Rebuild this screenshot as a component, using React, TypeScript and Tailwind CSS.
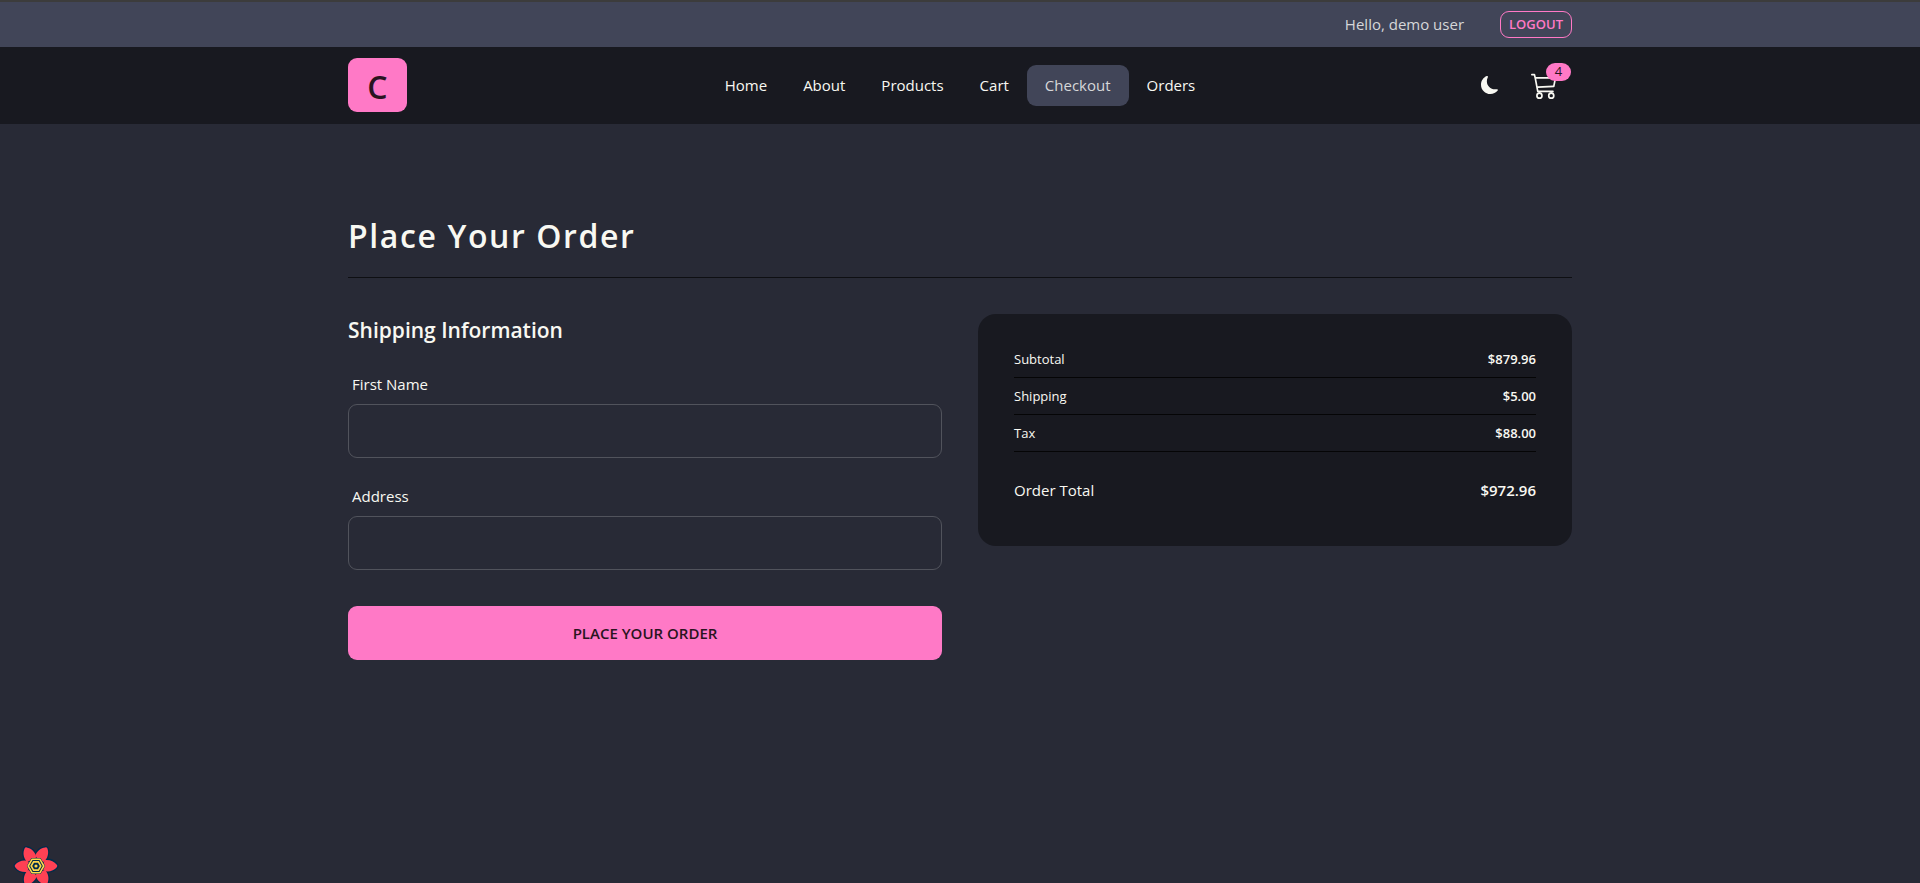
import { useState } from "react";
import { BsCart3, BsMoonFill } from "react-icons/bs";

const links = ["Home", "About", "Products", "Cart", "Checkout", "Orders"];

const charges = [
  { label: "Subtotal", amount: "$879.96" },
  { label: "Shipping", amount: "$5.00" },
  { label: "Tax", amount: "$88.00" },
];

const orderTotal = "$972.96";

const petals = [0, 60, 120, 180, 240, 300];

const petalPath =
  "M-7.4 -4.6 C-12 -6.6 -18 -4.8 -20.8 -1.2 C-21.4 -0.4 -21.4 0.4 -20.8 1.2 C-18 5 -13.6 6.6 -8.8 6 C-7 2.8 -6.6 -0.8 -7.4 -4.6 Z";

function FlowerLogo() {
  return (
    <svg viewBox="-23 -23 46 46" className="size-[46px]" aria-hidden="true">
      <g fill="#002c4b" stroke="#002c4b" strokeWidth="2.6" strokeLinejoin="round">
        {petals.map((angle) => (
          <path key={angle} transform={`rotate(${angle})`} d={petalPath} />
        ))}
      </g>
      <g fill="#ff4154">
        {petals.map((angle) => (
          <path key={angle} transform={`rotate(${angle})`} d={petalPath} />
        ))}
      </g>
      <polygon points="-9.2,0 -4.6,-8 4.6,-8 9.2,0 4.6,8 -4.6,8" fill="#002c4b" />
      <g fill="none" stroke="#ffd94c" strokeWidth="1.6">
        <polygon points="-7.8,0 -3.9,-6.8 3.9,-6.8 7.8,0 3.9,6.8 -3.9,6.8" />
        <polygon points="-4.8,0 -2.4,-4.1 2.4,-4.1 4.8,0 2.4,4.1 -2.4,4.1" />
      </g>
      <circle r="1.6" fill="#ffd94c" />
    </svg>
  );
}

function TextField({ id, label }: { id: string; label: string }) {
  const [value, setValue] = useState("");
  return (
    <div>
      <label htmlFor={id} className="flex h-10 items-center px-1 text-[15px]">
        {label}
      </label>
      <input
        id={id}
        type="text"
        value={value}
        onChange={(e) => setValue(e.target.value)}
        className="h-[54px] w-full rounded-[9px] border border-[#51535c] bg-transparent px-4 text-[15px] outline-none focus:border-[#f8f8f2]"
      />
    </div>
  );
}

export default function App() {
  return (
    <div className="min-h-screen bg-[#282a36] font-['Open_Sans','Noto_Sans',sans-serif] text-[#f8f8f2]">
      <header className="border-t-2 border-[#3c3c3c] bg-[#414558]">
        <div className="mx-auto flex h-[45px] max-w-[1288px] items-center justify-end gap-9 px-8">
          <p className="text-[15px] text-[#d6d7d9]">Hello, demo user</p>
          <button
            type="button"
            className="h-[27px] rounded-[9px] border border-[#ff79c6] px-2 text-[13px] font-semibold text-[#ff79c6]"
          >
            LOGOUT
          </button>
        </div>
      </header>

      <nav className="bg-[#181920]">
        <div className="mx-auto grid max-w-[1288px] grid-cols-[1fr_auto_1fr] items-center px-8 pt-[11px] pb-3">
          <a
            href="#home"
            className="flex h-[54px] w-[59px] items-center justify-center rounded-[9px] bg-[#ff79c6] pt-1 text-[32px] font-semibold text-[#2a1420]"
          >
            C
          </a>
          <ul className="flex">
            {links.map((link) => (
              <li key={link}>
                <a
                  href={`#${link.toLowerCase()}`}
                  className={
                    link === "Checkout"
                      ? "flex h-[41px] items-center rounded-[9px] bg-[#414558] px-[18px] text-[15px] text-[#d6d7d9]"
                      : "flex h-[41px] items-center rounded-[9px] px-[18px] text-[15px]"
                  }
                >
                  {link}
                </a>
              </li>
            ))}
          </ul>
          <div className="flex items-center justify-end gap-8 pr-[14px]">
            <button type="button" aria-label="Toggle theme">
              <BsMoonFill className="size-[18px]" />
            </button>
            <a href="#cart" aria-label="Cart, 4 items" className="relative">
              <BsCart3 className="size-[27px]" />
              <span className="absolute -top-[9px] -right-[13px] flex h-[18px] w-[25px] items-center justify-center rounded-full bg-[#ff79c6] text-[13px] text-[#2a1420]">
                4
              </span>
            </a>
          </div>
        </div>
      </nav>

      <main className="mx-auto max-w-[1288px] px-8 pt-[91px]">
        <div className="border-b border-[#0e0f13] pb-5">
          <h1 className="text-[32px] leading-[42px] font-semibold tracking-wider">Place Your Order</h1>
        </div>
        <div className="mt-9 grid grid-cols-2 items-start gap-9">
          <form onSubmit={(e) => e.preventDefault()}>
            <h2 className="text-[21px] leading-8 font-semibold">Shipping Information</h2>
            <div className="mt-[18px] flex flex-col gap-[18px]">
              <TextField id="first-name" label="First Name" />
              <TextField id="address" label="Address" />
            </div>
            <button
              type="submit"
              className="mt-9 h-[54px] w-full rounded-[9px] bg-[#ff79c6] text-[15px] font-semibold text-[#2a1420]"
            >
              PLACE YOUR ORDER
            </button>
          </form>

          <section className="rounded-[18px] bg-[#181920] p-9">
            {charges.map((row) => (
              <p
                key={row.label}
                className="mb-[9px] flex justify-between border-b border-[#050506] pb-[9px] text-[13px] leading-[18px]"
              >
                <span>{row.label}</span>
                <span className="font-semibold">{row.amount}</span>
              </p>
            ))}
            <p className="mt-[27px] flex justify-between pb-[9px] text-[15px] leading-[22px]">
              <span>Order Total</span>
              <span className="font-semibold">{orderTotal}</span>
            </p>
          </section>
        </div>
      </main>

      <button type="button" aria-label="Open query tools" className="fixed -bottom-[6px] left-[13px]">
        <FlowerLogo />
      </button>
    </div>
  );
}
